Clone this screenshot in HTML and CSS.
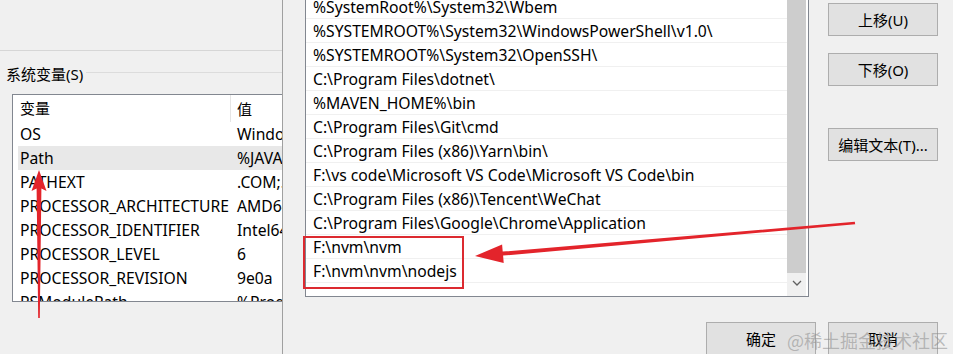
FILE: index.html
```html
<!DOCTYPE html>
<html lang="zh-CN">
  <head>
    <meta charset="UTF-8" />
    <meta name="viewport" content="width=device-width, initial-scale=1.0" />
    <title>编辑环境变量</title>
    <link rel="stylesheet" href="styles.css">
  </head>
  <body>
    <div class="screen">
      <!-- Background window: system variables -->
      <section class="env-window">
        <div class="user-area"></div>
        <div class="group-title"><span>系统变量(S)</span></div>
        <div class="var-table">
          <div class="var-head">
            <span class="head-name">变量</span>
            <span class="head-value">值</span>
          </div>
          <div class="var-row"><span class="col-name">OS</span><span class="col-value">Windows_NT</span></div>
          <div class="var-row selected"><span class="col-name">Path</span><span class="col-value">%JAVA_HOME%\bin</span></div>
          <div class="var-row"><span class="col-name">PATHEXT</span><span class="col-value">.COM;.EXE;.BAT</span></div>
          <div class="var-row"><span class="col-name">PROCESSOR_ARCHITECTURE</span><span class="col-value">AMD64</span></div>
          <div class="var-row"><span class="col-name">PROCESSOR_IDENTIFIER</span><span class="col-value">Intel64 Family 6</span></div>
          <div class="var-row"><span class="col-name">PROCESSOR_LEVEL</span><span class="col-value">6</span></div>
          <div class="var-row"><span class="col-name">PROCESSOR_REVISION</span><span class="col-value">9e0a</span></div>
          <div class="var-row"><span class="col-name">PSModulePath</span><span class="col-value">%ProgramFiles%</span></div>
        </div>
      </section>

      <!-- Edit environment variable dialog -->
      <section class="edit-dialog">
        <div class="dialog-main">
          <div class="path-list">
            <ul class="path-items">
              <li>%SystemRoot%\System32\Wbem</li>
              <li>%SYSTEMROOT%\System32\WindowsPowerShell\v1.0\</li>
              <li>%SYSTEMROOT%\System32\OpenSSH\</li>
              <li>C:\Program Files\dotnet\</li>
              <li>%MAVEN_HOME%\bin</li>
              <li>C:\Program Files\Git\cmd</li>
              <li>C:\Program Files (x86)\Yarn\bin\</li>
              <li>F:\vs code\Microsoft VS Code\Microsoft VS Code\bin</li>
              <li>C:\Program Files (x86)\Tencent\WeChat</li>
              <li>C:\Program Files\Google\Chrome\Application</li>
              <li>F:\nvm\nvm</li>
              <li>F:\nvm\nvm\nodejs</li>
            </ul>
            <div class="scrollbar">
              <div class="thumb"></div>
              <div class="scroll-down">
                <svg width="10" height="6" viewBox="0 0 10 6">
                  <path d="M1 1 L5 5 L9 1" fill="none" stroke="#606060" stroke-width="1.3" />
                </svg>
              </div>
            </div>
          </div>
          <div class="side-buttons">
            <button class="win-btn">上移(U)</button>
            <button class="win-btn move-down">下移(O)</button>
            <button class="win-btn edit-text">编辑文本(T)...</button>
          </div>
        </div>
        <div class="dialog-foot">
          <button class="win-btn">确定</button>
          <button class="win-btn">取消</button>
        </div>
      </section>
    </div>

    <!-- Annotations drawn on top of the screenshot -->
    <svg class="marks" width="953" height="354" viewBox="0 0 953 354">
      <rect x="304" y="237" width="159" height="51" fill="none" stroke="#dc2a30" stroke-width="2" />
      <polygon fill="#e3242b" points="475,256 503.7,263 503.1,255.6 855.2,224.2 854.8,221.8 502.7,251.6 502.1,244.4" />
      <polygon fill="#e3242b" points="39,170 46.5,191 41.4,188.5 39.8,318 38.2,318 36.6,188.5 31.5,191" />
    </svg>
    <div class="watermark">@稀土掘金技术社区</div>
  </body>
</html>
```

FILE: styles.css
```css
html,
body {
  margin: 0;
  padding: 0;
}
body {
  width: 953px;
  height: 354px;
  overflow: hidden;
  position: relative;
  background: #f0f0f0;
  font-family: "Noto Sans", "Noto Sans CJK SC", sans-serif;
  font-size: 15px;
  color: #000;
}
.screen {
  display: flex;
  height: 354px;
}

/* background window */
.env-window {
  width: 282px;
  flex: none;
  overflow: hidden;
}
.user-area {
  height: 50px;
  border-bottom: 1px solid #d6d6d6;
}
.group-title {
  display: flex;
  align-items: center;
  height: 22px;
  margin-top: 11px;
  padding-left: 6px;
  white-space: nowrap;
}
.group-title::after {
  content: "";
  flex: 1;
  border-top: 1px solid #dcdcdc;
  margin-left: 3px;
  margin-top: -2px;
}
.var-table {
  width: 320px;
  height: 206px;
  margin: 10px 0 0 12px;
  border: 1px solid #828790;
  background: #fff;
  overflow: hidden;
  white-space: nowrap;
}
.var-head {
  display: flex;
  height: 27px;
  align-items: center;
  padding-left: 7px;
}
.head-name {
  width: 210px;
  height: 27px;
  line-height: 27px;
  border-right: 1px solid #e5e5e5;
}
.head-value {
  padding-left: 6px;
}
.var-row {
  display: flex;
  height: 24px;
  line-height: 24px;
  font-size: 15.7px;
  margin-left: 5px;
  padding-left: 2px;
}
.var-row.selected {
  background: #e8e8e8;
}
.col-name {
  width: 217px;
  flex: none;
}

/* edit dialog */
.edit-dialog {
  flex: 1;
  border-left: 1px solid #a0a0a0;
  padding-left: 22px;
}
.dialog-main {
  display: flex;
  align-items: flex-start;
  margin-top: -6px;
}
.path-list {
  display: flex;
  width: 502px;
  height: 301px;
  border: 1px solid #828790;
  background: #fff;
}
.path-items {
  flex: 1;
  list-style: none;
  margin: 0;
  padding: 0;
  font-size: 15.7px;
  white-space: nowrap;
  overflow: hidden;
}
.path-items li {
  height: 24px;
  line-height: 24px;
  box-sizing: border-box;
  padding-left: 7px;
  border-bottom: 1px solid #f0f0f0;
}
.scrollbar {
  width: 19px;
  margin-right: 2px;
  display: flex;
  flex-direction: column;
  background: #f0f0f0;
}
.thumb {
  height: 278px;
  background: #cdcdcd;
}
.scroll-down {
  height: 20px;
  display: flex;
  align-items: center;
  justify-content: center;
}
.side-buttons {
  display: flex;
  flex-direction: column;
  margin-left: 19px;
  padding-top: 9px;
}
.win-btn {
  width: 110px;
  height: 33px;
  box-sizing: border-box;
  border: 1px solid #adadad;
  background: #e1e1e1;
  font-family: "Noto Sans", "Noto Sans CJK SC", sans-serif;
  font-size: 15px;
  color: #000;
  padding: 0;
}
.move-down {
  margin-top: 17px;
}
.edit-text {
  margin-top: 42px;
}
.dialog-foot {
  display: flex;
  justify-content: flex-end;
  gap: 12px;
  margin-top: 25px;
  padding-right: 15px;
}

/* annotations */
.marks {
  position: absolute;
  left: 0;
  top: 0;
  pointer-events: none;
}
.watermark {
  position: absolute;
  left: 787px;
  top: 327px;
  font-family: "Noto Sans CJK SC", sans-serif;
  font-size: 18px;
  color: rgba(140, 140, 140, 0.55);
  white-space: nowrap;
}
```
